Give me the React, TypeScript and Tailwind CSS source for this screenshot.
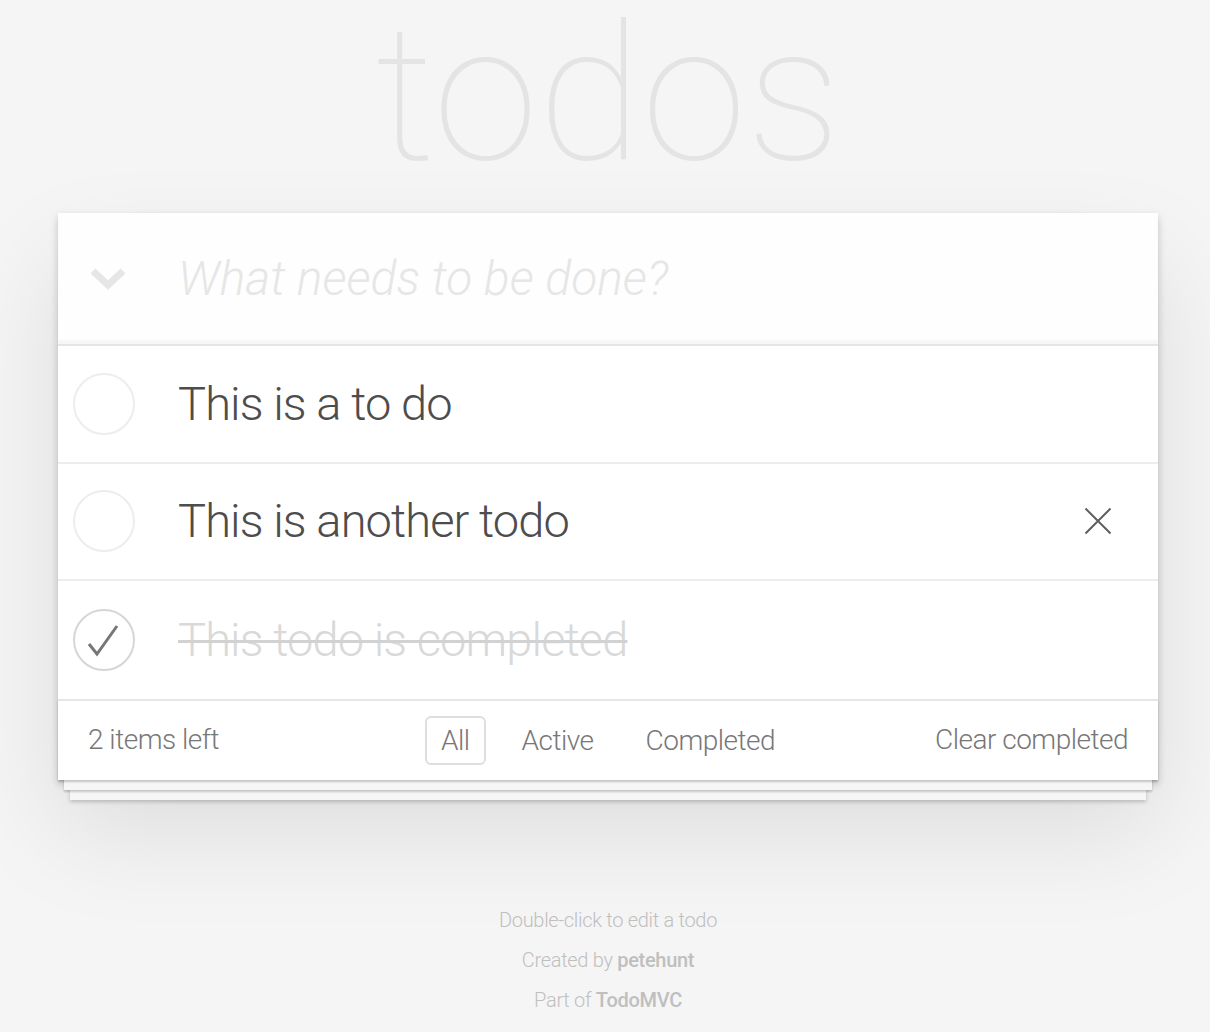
import React from "react";

type Todo = { id: number; title: string; completed: boolean };

const todos: Todo[] = [
  { id: 1, title: "This is a to do", completed: false },
  { id: 2, title: "This is another todo", completed: false },
  { id: 3, title: "This todo is completed", completed: true },
];

const ToggleCircle = ({ checked }: { checked: boolean }) => (
  <svg width="64" height="64" viewBox="0 0 64 64" className="shrink-0">
    <circle
      cx="32"
      cy="32"
      r="30"
      fill="none"
      stroke={checked ? "#d6d6d6" : "#ededed"}
      strokeWidth="2"
    />
    {checked && (
      <path
        d="M17 36 L25 46 L45 18"
        fill="none"
        stroke="#777"
        strokeWidth="3"
      />
    )}
  </svg>
);

const TodoItem = ({ todo, hover, last }: { todo: Todo; hover?: boolean; last?: boolean }) => (
  <li
    className={
      "flex items-center h-[117.5px] " + (last ? "" : "border-b-2 border-[#ededed]")
    }
  >
    <div className="w-[120px] pl-[14px] flex items-center">
      <ToggleCircle checked={todo.completed} />
    </div>
    <label
      className={
        todo.completed
          ? "text-[47px] tracking-[-0.9px] leading-[58px] text-[#d9d9d9] line-through decoration-[#d2d2d2] decoration-[3px]"
          : "text-[47px] tracking-[-0.9px] leading-[58px] text-[#4d4d4d]"
      }
    >
      {todo.title}
    </label>
    {hover && (
      <button className="ml-auto mr-[46px]" aria-label="Delete">
        <svg width="28" height="28" viewBox="0 0 28 28">
          <path d="M1.5 1.5 L26.5 26.5 M26.5 1.5 L1.5 26.5" stroke="#5e5e5e" strokeWidth="2" />
        </svg>
      </button>
    )}
  </li>
);

const App = () => {
  return (
    <div className="min-h-screen bg-[#f5f5f5] font-['Roboto',sans-serif] font-light pb-[20px]">
      <div className="flex flex-col items-center pl-[6px]">
        <h1 className="-mt-[21px] text-[190px] leading-[230px] font-thin text-[#e4e4e4]">
          todos
        </h1>

        <section className="mt-[4px] w-[1100px] bg-white shadow-[0_4px_8px_0_rgba(0,0,0,0.2),0_50px_100px_0_rgba(0,0,0,0.1)]">
          <header className="h-[131px] flex items-center bg-[#fefefe] shadow-[inset_0_-4px_2px_rgba(0,0,0,0.03)]">
            <div className="w-[120px] flex justify-center pr-[20px]">
              <svg width="36" height="22" viewBox="0 0 36 22">
                <path d="M3 3 L18 17 L33 3" fill="none" stroke="#e6e6e6" strokeWidth="7" />
              </svg>
            </div>
            <input
              className="flex-1 bg-transparent outline-none text-[48px] italic font-light text-[#4d4d4d] placeholder:text-[#e6e6e6] placeholder:italic"
              placeholder="What needs to be done?"
            />
          </header>

          <ul className="border-t-2 border-[#e6e6e6]">
            {todos.map((t, i) => (
              <TodoItem key={t.id} todo={t} hover={i === 1} last={i === todos.length - 1} />
            ))}
          </ul>

          <footer className="h-[81.5px] border-t-2 border-[#e6e6e6] px-[30px] grid grid-cols-[1fr_auto_1fr] items-center text-[28px] tracking-[-0.5px] text-[#777] shadow-[0_2px_2px_rgba(0,0,0,0.2),0_16px_0_-6px_#f6f6f6,0_18px_2px_-6px_rgba(0,0,0,0.2),0_32px_0_-12px_#f6f6f6,0_34px_4px_-12px_rgba(0,0,0,0.2)]">
            <span>2 items left</span>
            <ul className="flex items-center gap-[20px]">
              <li>
                <a className="block px-[14px] py-[6px] leading-[33px] border-2 border-[#dedede] rounded-[6px]">
                  All
                </a>
              </li>
              <li>
                <a className="block px-[14px] py-[6px] leading-[33px] border-2 border-transparent rounded-[6px]">
                  Active
                </a>
              </li>
              <li>
                <a className="block px-[14px] py-[6px] leading-[33px] border-2 border-transparent rounded-[6px]">
                  Completed
                </a>
              </li>
            </ul>
            <button className="justify-self-end tracking-[-0.5px]">Clear completed</button>
          </footer>
        </section>

        <footer className="mt-[120px] text-center text-[20px] tracking-[-0.3px] leading-[40px] text-[#bfbfbf]">
          <p>Double-click to edit a todo</p>
          <p>
            Created by <a className="font-medium">petehunt</a>
          </p>
          <p>
            Part of <a className="font-medium">TodoMVC</a>
          </p>
        </footer>
      </div>
    </div>
  );
};

export default App;
